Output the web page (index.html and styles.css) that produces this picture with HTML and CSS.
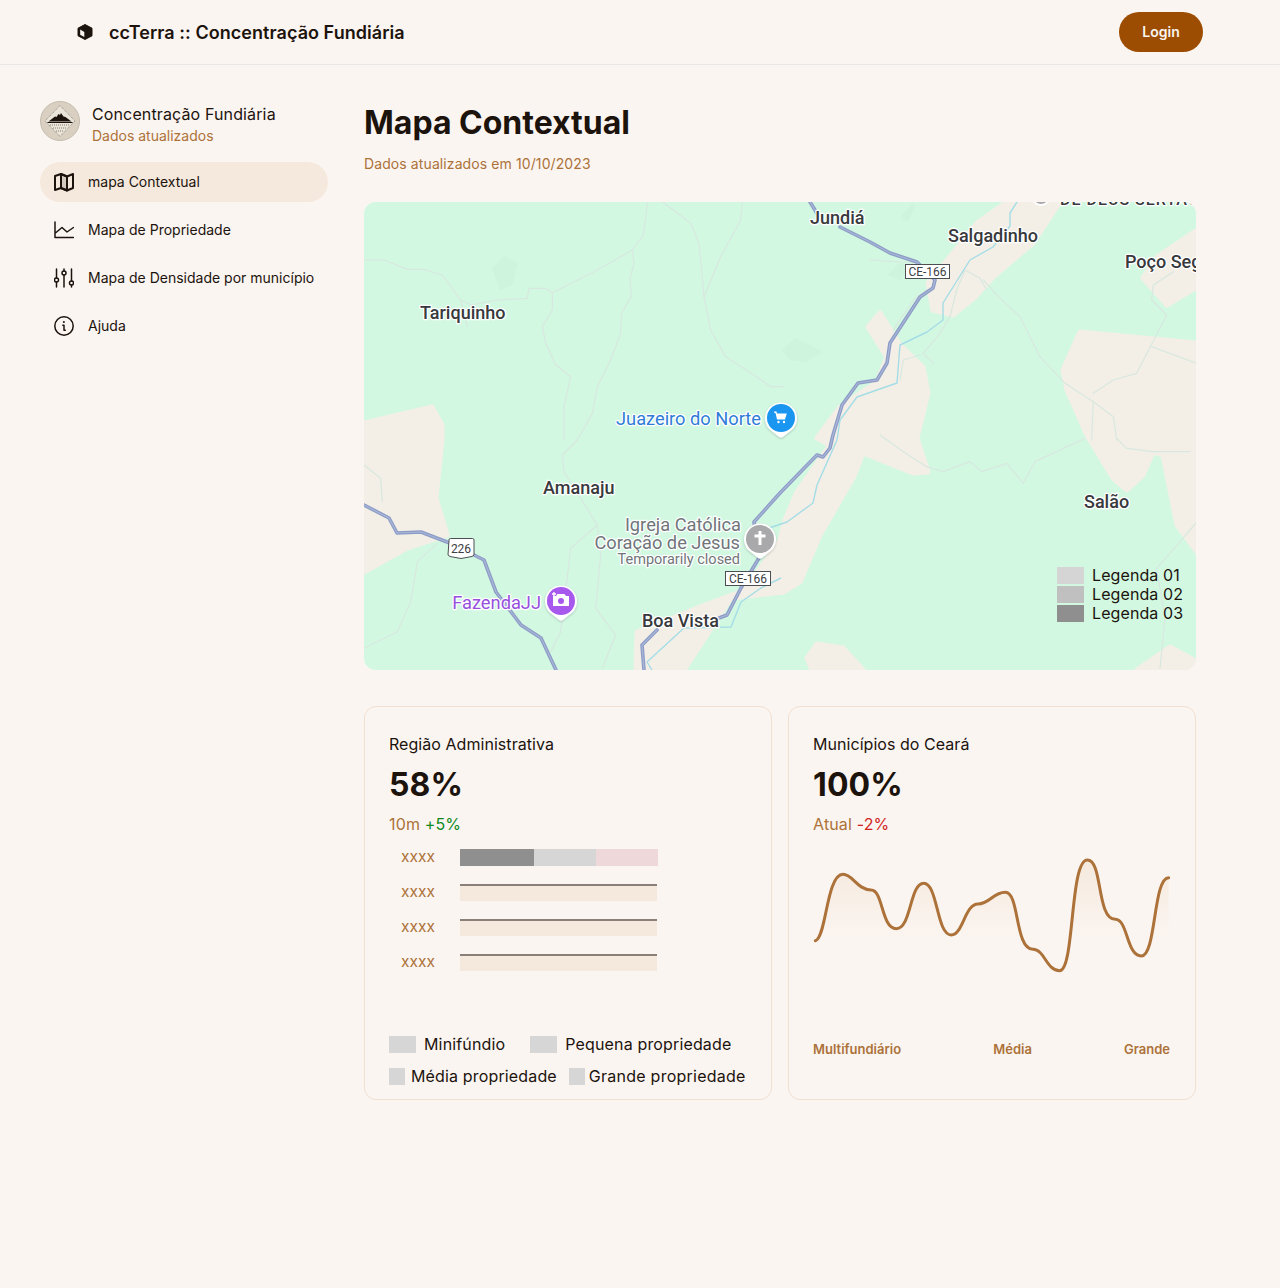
FILE: index.html
```html
<!DOCTYPE html>
<html lang="pt-BR">
<head>
<meta charset="utf-8">
<title>ccTerra :: Concentração Fundiária</title>
<link rel="stylesheet" href="styles.css">
</head>
<body>
<header class="topbar">
  <div class="brand">
    <svg class="brand-icon" viewBox="0 0 16 16"><path d="M8 .5 15 4.200v7.600L8 15.500 1 11.800V4.200z" fill="#1c130d" stroke="#1c130d" stroke-width="1" stroke-linejoin="round"/><path d="M3.200 5.600 7.300 7.900v5L3.200 10.700z" fill="#fbf5f1"/></svg>
    <span class="brand-name">ccTerra :: Concentração Fundiária</span>
  </div>
  <button class="login">Login</button>
</header>

<div class="layout">
  <aside class="sidebar">
    <div class="profile">
      <svg class="avatar" viewBox="0 0 40 40">
        <circle cx="20" cy="20" r="19.500" fill="#d9d0c2" stroke="#c4bcae"/>
        <path d="M20 4.500 35 20 20 35.500 5 20z" fill="#e9e3d8" stroke="#6f675c" stroke-width=".7" stroke-dasharray="1 1"/>
        <path d="M8.500 20.500 15 15.500l1.500.5 2-3 1.500 1 1-2 2.500 3.500 2 .5 6 4.500z" fill="#1c130d"/>
        <path d="M7.500 21.500h25" stroke="#1c130d" stroke-width="1"/>
        <path d="M10 24h20M13 27h14M16 30h8" stroke="#6b6358" stroke-width=".8" stroke-dasharray="1 1"/>
      </svg>
      <div class="profile-text">
        <div class="profile-name">Concentração Fundiária</div>
        <div class="profile-sub">Dados atualizados</div>
      </div>
    </div>
    <nav class="nav">
      <a class="nav-item is-active">
        <svg class="nav-icon" viewBox="0 0 20 20"><path d="M1 4 7 2v14l-6 2zM7 2l6 2.500v14L7 16zM13 4.500 19 2v14l-6 2.500z" /><path class="panel" d="M7 2l6 2.500v14L7 16z"/></svg>
        <span>mapa Contextual</span>
      </a>
      <a class="nav-item">
        <svg class="nav-icon thin" viewBox="0 0 20 20"><path d="M1 2v15.500h18.500M2 12.500 8 7.500l5 4.500 6.500-4.500"/></svg>
        <span>Mapa de Propriedade</span>
      </a>
      <a class="nav-item">
        <svg class="nav-icon thin" viewBox="0 0 20 20"><path d="M2.500 1v9M2.500 14v5M10 1v2M10 7v12M17.500 1v12M17.500 17v2"/><circle cx="2.500" cy="12" r="2"/><circle cx="10" cy="5" r="2"/><circle cx="17.500" cy="15" r="2"/></svg>
        <span>Mapa de Densidade por município</span>
      </a>
      <a class="nav-item">
        <svg class="nav-icon thin" viewBox="0 0 20 20"><circle cx="10" cy="10" r="9.200"/><path d="M8.800 9.300H10v5h1.300"/><circle class="dot" cx="9.900" cy="6" r="1"/></svg>
        <span>Ajuda</span>
      </a>
    </nav>
  </aside>

  <main class="main">
    <h1 class="page-title">Mapa Contextual</h1>
    <p class="page-sub">Dados atualizados em 10/10/2023</p>

    <section class="map">
      <svg class="map-canvas" viewBox="364 202 832 468" width="832" height="468">
        <rect x="364" y="202" width="832" height="468" fill="#d2f8e2"/>

        <g class="land">
          <path d="M1060 202 1033 243 993 277 975 297 953 315 933 310 928 283 953 253 977 223 1007 202z"/>
          <path d="M817 438 830 445 797 492 785 520 780 540 745 590 700 607 637 632 636 670 684 670 731 598 784 592 800 582 820 535 853 478 863 453 913 473 928 472 917 438 928 393 923 367 900 345 880 313 868 327 887 357 877 382 840 407z"/>
          <path d="M364 423 432 407 442 425 442 440 436 498 447 535 407 548 364 572z"/>
          <path d="M1063 370 1080 332 1197 343V552L1177 525 1163 455 1153 452 1143 475 1127 490 1113 478 1087 435 1067 390z"/>
          <path d="M1143 278 1167 305 1197 287V230L1157 257z"/>
          <path d="M807 658 817 644 843 648 863 670H812z"/>
          <path d="M1137 670 1170 647 1197 662V670z"/>
        </g>

        <g class="tufts">
          <path d="M492 268 505 256 518 264 512 285 500 290z"/>
          <path d="M782 350 795 338 812 346 822 352 806 362 790 360z"/>
          <path d="M888 275 900 262 908 266 900 280z"/>
          <path d="M900 218 912 204 916 206 908 222z"/>
        </g>

        <g transform="translate(364 200) scale(.33333)" class="minor">
          <path d="M0 180 60 180 130 208 180 208 235 225 290 300 310 380"/>
          <path d="M290 300 320 315 400 300 490 295 495 265 545 265 565 278 700 210 805 150 838 105 850 10"/>
          <path d="M565 278 565 330 535 380 545 430 575 495 620 530 600 620 600 720"/>
          <path d="M805 150 810 190 798 235 802 290 772 340 770 400 740 480 700 560 685 640 640 720"/>
          <path d="M895 5 980 70 1005 130 1020 290 1040 390 1085 470 1170 525 1220 560 1260 560"/>
          <path d="M1135 5 1130 60 1070 170 1020 290"/>
        </g>
        <g transform="translate(364 435) scale(.33333)" class="minor">
          <path d="M640 15 595 60 600 110 650 190 700 270 620 340 590 590 560 650"/>
          <path d="M700 270 710 360 695 520 755 600 715 700"/>
          <path d="M220 325 160 380 140 500 100 590 0 640"/>
          <path d="M0 90 50 130 55 200"/>
        </g>
        <g transform="translate(780 435) scale(.33333)" class="minor">
          <path d="M300 0 370 50 440 95 490 110 570 80 605 110 680 85 730 145 765 80 915 10"/>
          <path d="M1010 10 1040 40 1120 50 1230 50"/>
          <path d="M1260 250 1200 320 1130 400 1155 550 1140 700"/>
        </g>
        <g transform="translate(780 200) scale(.33333)" class="minor">
          <path d="M610 240 660 295 720 350 780 470 855 550 940 605 1000 650 1010 720"/>
          <path d="M940 605 935 720"/>
          <path d="M1070 520 1160 345 1115 300 1120 255 1180 215"/>
          <path d="M1115 440 1250 490"/>
          <path d="M1070 520 1000 540 940 580"/>
          <path d="M555 210 600 235 620 270M555 210 530 270 510 350 480 400 430 460 460 490M360 540 370 480 420 465"/>
          <path d="M270 180 420 190M340 390 400 300 440 270"/>
        </g>

        <g class="river">
          <path d="M1017 202 1010 213 1010 226 993 247 970 260 943 303 943 320 927 332 900 345 897 383 857 397 840 420 837 440 817 485 813 503 787 522 769 528"/>
          <path d="M781 578 761 588 741 602 731 627 684 628 647 662 652 670"/>
        </g>

        <g class="road">
          <path class="road-line" d="M810 202 815 210 818 216M840 227 870 242 890 253 917 262 935 280 933 288 920 297 890 343 887 363 877 380 858 383 842 405 833 435 830 448 823 457 817 455 780 493 754 522 759 558 741 588 727 615 719 618M657 630 642 645 644 670"/>
          <path class="road-line" d="M364 505 389 518 397 533 421 532 447 542 474 555 484 560 496 592 521 625 541 638 556 670"/>
          <path class="road-core" d="M810 202 815 210 818 216M840 227 870 242 890 253 917 262 935 280 933 288 920 297 890 343 887 363 877 380 858 383 842 405 833 435 830 448 823 457 817 455 780 493 754 522 759 558 741 588 727 615 719 618M657 630 642 645 644 670"/>
          <path class="road-core" d="M364 505 389 518 397 533 421 532 447 542 474 555 484 560 496 592 521 625 541 638 556 670"/>
        </g>

        <text class="lbl lbl-clip" x="1060" y="205">DE DEUS SERTÃO</text>
        <circle cx="1041" cy="196" r="9" fill="#a9a9ab" stroke="#fff" stroke-width="2"/>

        <text class="lbl" x="810" y="224">Jundiá</text>
        <text class="lbl" x="948" y="242">Salgadinho</text>
        <text class="lbl" x="1125" y="268">Poço Seg</text>
        <text class="lbl" x="420" y="319">Tariquinho</text>
        <text class="lbl" x="543" y="494">Amanaju</text>
        <text class="lbl" x="642" y="627">Boa Vista</text>
        <text class="lbl" x="1084" y="508">Salão</text>

        <text class="poi poi-blue" x="761" y="425">Juazeiro do Norte</text>
        <text class="poi poi-purple" x="541" y="609">FazendaJJ</text>
        <text class="poi poi-grey" x="741" y="531">Igreja Católica</text>
        <text class="poi poi-grey" x="740" y="549">Coração de Jesus</text>
        <text class="poi poi-small" x="740" y="564">Temporarily closed</text>

        <g class="shield">
          <rect x="905.500" y="264.500" width="44" height="14"/>
          <text x="927.500" y="275.500">CE-166</text>
          <rect x="725.500" y="571.500" width="45" height="14"/>
          <text x="748" y="582.500">CE-166</text>
          <path d="M449 540q0-1.500 1.500-1.500h22q1.500 0 1.500 1.500v15l-2 1.500-11 2-11-2-2-1.500z"/>
          <text x="461" y="552.500">226</text>
        </g>

        <g>
          <path class="pin-tail" d="M769 429a16 16 0 1 1 24 0l-10 8q-2 1.500-4 0z"/>
          <circle cx="781" cy="418" r="14" fill="#1a96f0"/>
          <path d="M774 412h2l1.500 7h7l1.500-5h-9.500" fill="#fff" stroke="#fff" stroke-width="1.200"/>
          <circle cx="778.500" cy="422" r="1.200" fill="#fff"/><circle cx="784" cy="422" r="1.200" fill="#fff"/>

          <path class="pin-tail" d="M748 550a16 16 0 1 1 24 0l-10 8q-2 1.500-4 0z"/>
          <circle cx="760" cy="539" r="14" fill="#a9a9ab"/>
          <path d="M758.500 531h3v3.500h4v3h-4v7.500h-3v-7.500h-4v-3h4z" fill="#fff"/>

          <path class="pin-tail" d="M549 612a16 16 0 1 1 24 0l-10 8q-2 1.500-4 0z"/>
          <circle cx="561" cy="601" r="14" fill="#a659ec"/>
          <path d="M553 596h3l1.500-2h7l1.500 2h3v10h-16z" fill="#fff"/>
          <circle cx="561" cy="601" r="3" fill="#a659ec"/>
          <path d="M554 592v4M552 594h4" stroke="#fff" stroke-width="1.300"/>
        </g>
      </svg>

      <ul class="map-legend">
        <li class="map-legend-row"><span class="map-swatch swatch-a"></span>Legenda 01</li>
        <li class="map-legend-row"><span class="map-swatch swatch-b"></span>Legenda 02</li>
        <li class="map-legend-row"><span class="map-swatch swatch-c"></span>Legenda 03</li>
      </ul>
    </section>

    <section class="cards">
      <article class="card">
        <h2 class="card-title">Região Administrativa</h2>
        <div class="card-value">58%</div>
        <div class="card-sub"><span>10m</span> <span class="up">+5%</span></div>
        <div class="bars">
          <div class="bar-label">xxxx</div>
          <div class="bar bar-split"><span class="seg seg-dark"></span><span class="seg seg-mid"></span><span class="seg seg-pink"></span></div>
          <div class="bar-label">xxxx</div>
          <div class="bar bar-line"></div>
          <div class="bar-label">xxxx</div>
          <div class="bar bar-line"></div>
          <div class="bar-label">xxxx</div>
          <div class="bar bar-line"></div>
        </div>
        <div class="key">
          <div class="key-row">
            <span class="key-item key-first"><i class="key-swatch"></i>Minifúndio</span>
            <span class="key-item key-wide"><i class="key-swatch"></i>Pequena propriedade</span>
          </div>
          <div class="key-row">
            <span class="key-item key-narrow"><i class="key-swatch"></i>Média propriedade</span>
            <span class="key-item key-narrower"><i class="key-swatch"></i>Grande propriedade</span>
          </div>
        </div>
      </article>

      <article class="card">
        <h2 class="card-title">Municípios do Ceará</h2>
        <div class="card-value">100%</div>
        <div class="card-sub"><span>Atual</span> <span class="down">-2%</span></div>
        <svg class="chart" viewBox="75 48 1074 360">
          <defs>
            <linearGradient id="area" x1="0" y1="0" x2="0" y2="1">
              <stop offset="0" stop-color="#f5e9dd"/>
              <stop offset=".7" stop-color="#f5e9dd" stop-opacity="0"/>
            </linearGradient>
          </defs>
          <path class="chart-area" d="M82 302C115 295 115 103 165 103C195 103 205 148 250 150C285 150 280 266 325 266C370 266 365 130 407 130C450 130 445 285 490 285C525 285 530 192 570 192C605 192 615 157 652 157C695 157 680 328 735 328C770 328 775 392 815 392C860 392 845 60 898 60C945 60 925 238 982 238C1020 238 1015 348 1060 348C1105 348 1095 113 1142 113V400H82z"/>
          <path class="chart-line" d="M82 302C115 295 115 103 165 103C195 103 205 148 250 150C285 150 280 266 325 266C370 266 365 130 407 130C450 130 445 285 490 285C525 285 530 192 570 192C605 192 615 157 652 157C695 157 680 328 735 328C770 328 775 392 815 392C860 392 845 60 898 60C945 60 925 238 982 238C1020 238 1015 348 1060 348C1105 348 1095 113 1142 113"/>
        </svg>
        <div class="chart-axis"><span>Multifundiário</span><span>Média</span><span>Grande</span></div>
      </article>
    </section>
  </main>
</div>
</body>
</html>
```

FILE: styles.css
```css
* { box-sizing: border-box; }
html, body { margin: 0; padding: 0; }
body {
  min-height: 1288px;
  background: #fbf5f1;
  color: #1c130d;
  font-family: Inter, "Noto Sans", "Liberation Sans", sans-serif;
}

.topbar {
  height: 65px;
  border-bottom: 1px solid #e9e7e5;
  display: flex;
  align-items: center;
  justify-content: space-between;
  padding: 0 77px 0 77px;
}
.brand { display: flex; align-items: center; gap: 16px; padding-top: 1px; }
.brand-icon { width: 16px; height: 16px; display: block; margin-top: -2px; }
.brand-name { font-size: 18px; font-weight: 600; letter-spacing: 0.05px; line-height: 24px; }
.login {
  width: 84px;
  height: 40px;
  border: 0;
  border-radius: 20px;
  background: #9c4d02;
  color: #fbf5f1;
  font: 600 14px/20px Inter, sans-serif;
}

.layout { display: flex; gap: 36px; padding: 36px 0 0 40px; }
.sidebar { width: 288px; flex: none; }

.profile { display: flex; align-items: center; gap: 12px; height: 40px; }
.avatar { width: 40px; height: 40px; flex: none; display: block; }
.profile-text { padding-top: 6px; }
.profile-name { font-size: 16px; line-height: 24px; letter-spacing: 0.13px; }
.profile-sub { font-size: 14px; line-height: 20px; color: #ac7239; letter-spacing: 0; }

.nav { display: flex; flex-direction: column; gap: 8px; margin-top: 21px; }
.nav-item {
  display: flex;
  align-items: center;
  gap: 14px;
  height: 40px;
  padding: 0 14px;
  border-radius: 20px;
  font-size: 14px;
  line-height: 20px;
  letter-spacing: 0;
  white-space: nowrap;
}
.nav-item.is-active { background: #f5e9dd; }
.nav-icon { width: 20px; height: 20px; flex: none; display: block; fill: none; stroke: #1c130d; stroke-width: 2; stroke-linejoin: round; }
.nav-icon .panel { fill: #1c130d; fill-opacity: .15; }
.nav-icon.thin { stroke-width: 1.5; stroke-linecap: round; }
.nav-icon .dot { fill: #1c130d; stroke: none; }

.main { width: 832px; flex: none; }
.page-title { margin: 0; padding-top: 1px; font-size: 32px; line-height: 42px; font-weight: 700; letter-spacing: 0; }
.page-sub { margin: 9px 0 0; font-size: 14px; line-height: 21px; color: #ac7239; letter-spacing: 0.1px; }

.map { position: relative; margin-top: 28px; height: 468px; border-radius: 12px; overflow: hidden; }
.map-canvas { display: block; }
.land path { fill: #f3efe6; stroke: #f3efe6; stroke-width: 5; stroke-linejoin: round; }
.tufts path { fill: #c9eed8; opacity: .4; }
.minor path { fill: none; stroke: #d8e8df; stroke-width: 3.600; stroke-linejoin: round; stroke-linecap: round; }
.river path { fill: none; stroke: #a5dde6; stroke-width: 1.400; stroke-linejoin: round; }
.road-line { fill: none; stroke: #8c9cc6; stroke-width: 3.600; stroke-linejoin: round; stroke-linecap: round; }
.road-core { fill: none; stroke: #a9b6d8; stroke-width: 1.200; stroke-linejoin: round; stroke-linecap: round; }
.lbl, .poi { font-family: Roboto, sans-serif; paint-order: stroke; stroke: #fff; stroke-width: 2.500px; stroke-linejoin: round; }
.lbl { font-size: 18px; font-weight: 500; fill: #37393c; }
.lbl-clip { font-size: 16px; letter-spacing: 1px; }
.poi { font-size: 18.250px; text-anchor: end; }
.poi-blue { fill: #2f7cd7; }
.poi-purple { fill: #9650de; }
.poi-grey { fill: #70757a; }
.poi-small { font-size: 14.500px; fill: #70757a; }
.shield rect, .shield path { fill: #fff; stroke: #4b4f53; stroke-width: 1; }
.shield text { font-family: Roboto, sans-serif; font-size: 12px; fill: #3c4043; text-anchor: middle; }
.pin-tail { fill: #fff; filter: drop-shadow(0 1px 1px rgba(0, 0, 0, .18)); }

.map-legend { position: absolute; left: 693px; top: 365px; margin: 0; padding: 0; list-style: none; display: flex; flex-direction: column; gap: 2px; }
.map-legend-row { display: flex; align-items: center; gap: 8px; height: 17px; font-size: 16px; line-height: 17px; letter-spacing: 0.1px; }
.map-swatch { width: 27px; height: 17px; display: block; }
.swatch-a { background: #d4d5d4; }
.swatch-b { background: #bfc0bf; }
.swatch-c { background: #8f8f8f; }

.cards { display: grid; grid-template-columns: 408px 408px; gap: 16px; margin-top: 36px; }
.card { height: 394px; padding: 25px 24px 0; border: 1px solid #f2e0d0; border-radius: 12px; }
.card-title { margin: 0; font-size: 16px; line-height: 24px; font-weight: 400; letter-spacing: 0.05px; }
.card-value { margin-top: 9px; font-size: 32px; line-height: 40px; font-weight: 700; letter-spacing: 0.1px; }
.card-sub { margin-top: 7px; font-size: 16px; line-height: 24px; color: #ac7239; letter-spacing: 0.15px; }
.up { color: #0f8a1f; }
.down { color: #d01f1f; }

.bars { display: grid; grid-template-columns: 71px 198px; grid-auto-rows: 17px; row-gap: 18px; margin-top: 13px; }
.bar-label { padding-left: 12px; font-size: 15.500px; line-height: 15px; color: #ac7239; }
.bar { height: 17px; }
.bar-split { display: flex; }
.seg { height: 100%; display: block; }
.seg-dark { width: 74px; background: #8f8f8f; }
.seg-mid { width: 62px; background: #d6d6d6; }
.seg-pink { width: 62px; background: #efd8da; }
.bar-line { width: 197px; background: #f5e9dd; border-top: 2px solid #8a8078; }

.key { margin-top: 65px; display: flex; flex-direction: column; gap: 15px; }
.key-row { display: flex; height: 17px; align-items: center; }
.key-item { display: flex; align-items: center; font-size: 16px; line-height: 15px; letter-spacing: 0.15px; white-space: nowrap; }
.key-swatch { display: block; height: 17px; background: #d6d6d6; flex: none; }
.key-first { gap: 8px; margin-right: 25px; }
.key-wide { gap: 8px; }
.key-first .key-swatch, .key-wide .key-swatch { width: 27px; }
.key-narrow { gap: 6px; margin-right: 12px; }
.key-narrow .key-swatch { width: 16px; }
.key-narrower { gap: 4px; letter-spacing: 0.25px; }
.key-narrower .key-swatch { width: 16px; }

.chart { display: block; width: 358px; height: 120px; margin-top: 20px; }
.chart-area { fill: url(#area); }
.chart-line { fill: none; stroke: #ac7239; stroke-width: 9; stroke-linecap: round; }
.chart-axis { display: flex; justify-content: space-between; margin-top: 63px; padding-right: 1px; font-size: 13px; line-height: 20px; font-weight: 600; color: #ac7239; }
```
